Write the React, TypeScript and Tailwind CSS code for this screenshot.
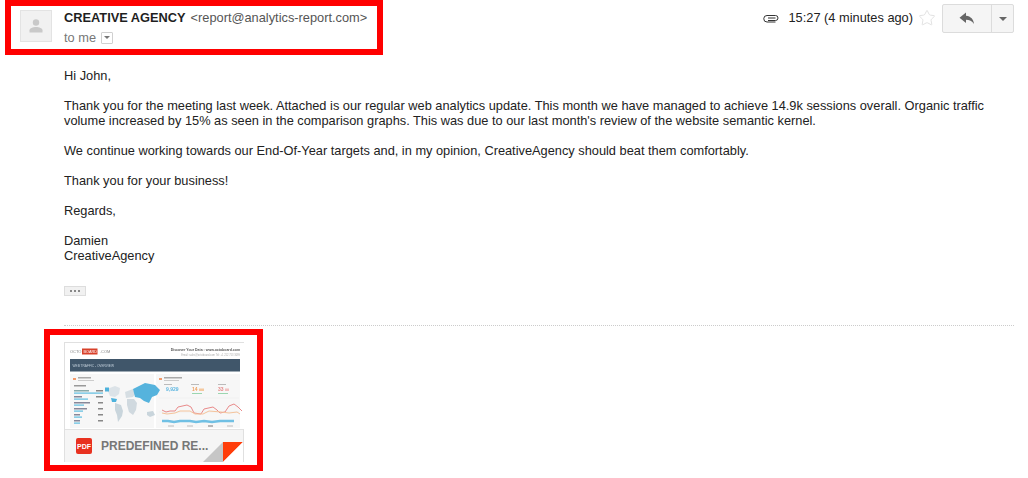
import { Star } from 'lucide-react';

const Avatar = () => (
    <div className="w-8 h-8 shrink-0 flex items-center justify-center bg-[#f1f1f1] border border-[#e3e3e3]">
        <svg width="16" height="16" viewBox="0 0 16 16">
            <circle cx="8" cy="4.5" r="3.2" fill="#c9c9c9" />
            <path d="M1.5 14.5v-2.2c0-2 3.4-3.3 6.5-3.3s6.5 1.300 6.500 3.300v2.200z" fill="#c9c9c9" />
        </svg>
    </div>
);

const ClipIcon = () => (
    <svg width="16" height="10" viewBox="0 0 16 10" fill="none" stroke="#333" strokeWidth="1">
        <path d="M5 7.500h7.500a2.300 2.300 0 0 0 0-5H4a3 3 0 0 0 0 6.500h8.500" />
        <path d="M12.500 5H5" />
    </svg>
);

const ReplyIcon = () => (
    <svg width="16" height="13" viewBox="0 0 16 13">
        <path d="M7 0.500L0.500 5.800L7 11V7.800c3.500 0 6 1 8 4.200c-.5-4.500-3-7.700-8-8.200z" fill="#666" />
    </svg>
);

const Thumbnail = () => (
    <svg width="180" height="86" viewBox="0 0 180 86" className="block">
        <defs>
            <filter id="soft" x="-5%" y="-5%" width="110%" height="110%">
                <feGaussianBlur stdDeviation="0.35" />
            </filter>
        </defs>
        <rect width="180" height="86" fill="#ffffff" />
        <g filter="url(#soft)">
            <text x="5" y="10" fontSize="4" fill="#888" fontFamily="Liberation Sans, sans-serif">OCTO</text>
            <rect x="17" y="5.500" width="15.500" height="6" fill="#d8402c" />
            <text x="18.500" y="10" fontSize="3.800" fill="#fff" fontFamily="Liberation Sans, sans-serif">BOARD</text>
            <text x="35" y="10" fontSize="4" fill="#888" fontFamily="Liberation Sans, sans-serif">.COM</text>
            <text x="175" y="8" fontSize="3.500" fill="#555" textAnchor="end" fontWeight="bold" fontFamily="Liberation Sans, sans-serif">Discover Your Data : www.octoboard.com</text>
            <text x="175" y="13" fontSize="2.600" fill="#aaa" textAnchor="end" fontFamily="Liberation Sans, sans-serif">Email: sales@octoboard.com Tel: +1 212 713 3099</text>

            <rect x="5" y="16" width="170" height="12.500" fill="#3f566b" />
            <text x="7.500" y="24" fontSize="3.200" fill="#c5d0da" fontFamily="Liberation Sans, sans-serif">WEB TRAFFIC - OVERVIEW</text>

            <rect x="5" y="31" width="84" height="54" fill="#f7f7f7" />
            <rect x="91" y="31" width="84" height="54" fill="#f7f7f7" />

            <rect x="8" y="35" width="3" height="2" fill="#f39a6b" />
            <rect x="13" y="34" width="13" height="1.500" fill="#aaa" />
            <rect x="13" y="37" width="16" height="1" fill="#ccc" />
            <rect x="9" y="42" width="12" height="1.500" fill="#999" />

            <rect x="9" y="47" width="15" height="1.500" fill="#8aa" />
            <rect x="31" y="47" width="7" height="1.500" fill="#888" />
            <rect x="9" y="49.500" width="29" height="1.200" fill="#5dbde0" />
            <rect x="9" y="53" width="8" height="1.500" fill="#889" />
            <rect x="31" y="53" width="7" height="1.500" fill="#888" />
            <rect x="9" y="55.500" width="14" height="1.200" fill="#5dbde0" />
            <rect x="9" y="59" width="16" height="1.500" fill="#889" />
            <rect x="33" y="59" width="5" height="1.500" fill="#888" />
            <rect x="9" y="61.500" width="10" height="1.200" fill="#5dbde0" />
            <rect x="9" y="65" width="13" height="1.500" fill="#889" />
            <rect x="33" y="65" width="5" height="1.500" fill="#888" />
            <rect x="9" y="67.500" width="9" height="1.200" fill="#5dbde0" />
            <rect x="9" y="71" width="6" height="1.500" fill="#889" />
            <rect x="33" y="71" width="5" height="1.500" fill="#888" />
            <rect x="9" y="73.500" width="8" height="1.200" fill="#5dbde0" />
            <rect x="9" y="77" width="6" height="1.500" fill="#889" />
            <rect x="33" y="77" width="5" height="1.500" fill="#888" />
            <rect x="9" y="79.500" width="6" height="1.200" fill="#5dbde0" />

            <path d="M42 46l8-3 5 2-1 6-4 3-5-1z" fill="#dce3e8" />
            <path d="M46 55l6 1-1 3-4 0z" fill="#4db2dc" />
            <path d="M50 60l6 2 2 6-1 5-4 6-1-7-2-5z" fill="#c9d5dc" />
            <path d="M60 49l8-3 2 5-2 3-7 1z" fill="#d6dee3" />
            <path d="M62 56l7 0 3 4-1 7-3 5-4-3-2-7z" fill="#d0d9df" />
            <path d="M68 46l12-6 10 2 5 5-3 5-5 2-3 6-5-2-4-3-5-1z" fill="#55b3dd" />
            <path d="M82 69l6-1 2 4-5 2-3-2z" fill="#c9d5dc" />
            <rect x="40" y="44.500" width="4" height="4" fill="#4db2dc" />

            <rect x="94" y="35" width="3" height="2" fill="#f39a6b" />
            <rect x="99" y="34" width="18" height="1.500" fill="#aaa" />
            <rect x="99" y="37" width="15" height="1" fill="#ccc" />
            <rect x="99" y="41" width="8" height="1" fill="#bbb" />
            <rect x="126" y="41" width="8" height="1" fill="#bbb" />
            <rect x="153" y="41" width="8" height="1" fill="#bbb" />
            <text x="101" y="48" fontSize="5" fill="#5db6e0" fontWeight="bold" fontFamily="Liberation Sans, sans-serif">9,929</text>
            <text x="127" y="48" fontSize="5" fill="#f0a060" fontWeight="bold" fontFamily="Liberation Sans, sans-serif">14</text>
            <rect x="134" y="45.500" width="5" height="2.500" fill="#f5c9a0" />
            <text x="153" y="48" fontSize="5" fill="#e58a8a" fontWeight="bold" fontFamily="Liberation Sans, sans-serif">33</text>
            <rect x="160" y="45.500" width="4" height="2.500" fill="#f1c0c0" />
            <rect x="127" y="50" width="10" height="1" fill="#9cd6b0" />
            <rect x="153" y="50" width="10" height="1" fill="#9cd6b0" />

            <line x1="94" y1="55" x2="174" y2="55" stroke="#e8e8e8" strokeWidth="0.500" />
            <line x1="94" y1="69" x2="174" y2="69" stroke="#e8e8e8" strokeWidth="0.500" />
            <path d="M97 67l4 2 4-1 5 0 3-4 9-2 4 2 3 6 7 1 3-5 9-2 4 3 3 3 5-1 4-6 5-2 4 3 4 4" fill="none" stroke="#e98a8a" strokeWidth="1" />
            <path d="M97 70l5 1 8-1 5-2 10 0 5 3 8 0 6-3 12 1 8 1 8-1 3 2" fill="none" stroke="#f5c49c" strokeWidth="1" />
            <path d="M97 78l6 0 6 1 6-1 10 0 6 1 8-1 8 1 8-1 14 0" fill="none" stroke="#70c0e4" strokeWidth="2.500" />
            <rect x="103" y="82.500" width="6" height="1" fill="#bbb" />
            <rect x="122" y="82.500" width="6" height="1" fill="#bbb" />
            <rect x="143" y="82.500" width="5" height="1" fill="#777" />
            <rect x="162" y="82.500" width="6" height="1" fill="#bbb" />
        </g>
    </svg>
);

const AttachmentFooter = () => (
    <div className="relative h-[33px] flex items-center bg-[#f5f5f5] border-t border-[#e2e2e2]">
        <div className="ml-[11px] w-4 h-4 rounded-[2px] bg-[#e8311f] flex items-center justify-center text-[7px] font-bold leading-none text-white">
            PDF
        </div>
        <span className="ml-[9px] text-[12px] font-bold text-[#777777] whitespace-nowrap">PREDEFINED RE...</span>
        <svg width="40" height="20" viewBox="0 0 40 20" className="absolute right-0 bottom-0">
            <polygon points="0,20 20,0 20,20" fill="#c6c6c6" />
            <polygon points="20,0 40,0 20,20" fill="#ff3d0a" />
            <polygon points="40,0 40,20 20,20" fill="#ffffff" />
        </svg>
    </div>
);

export default function App() {
    return (
        <div className="w-[1028px] h-[478px] overflow-hidden bg-white text-[12.8px] leading-[15px] text-[#222222] font-['Liberation_Sans',Arial,sans-serif]">
            <header className="flex justify-between pl-5 pr-[14px] pt-1 h-[68px]">
                <div className="relative flex gap-3 pt-1.5 h-fit">
                    <div className="absolute -left-[15px] -top-1 w-[378px] h-[55px] border-[6px] border-[#ff0000]" />
                    <Avatar />
                    <div className="flex flex-col">
                        <div className="flex items-baseline gap-[5px] whitespace-nowrap">
                            <span className="font-bold text-[#1f1f1f]">CREATIVE AGENCY</span>
                            <span className="text-[#555555]">&lt;report@analytics-report.com&gt;</span>
                        </div>
                        <div className="flex items-center gap-[5px] mt-[5px] text-[#777777]">
                            to me
                            <span className="w-3 h-3 flex items-center justify-center border border-[#d0d0d0] rounded-[1px]">
                                <span className="border-x-[3px] border-t-[3px] border-x-transparent border-t-[#777777]" />
                            </span>
                        </div>
                    </div>
                </div>

                <div className="flex items-start">
                    <div className="flex items-center h-[29px] pb-[2px]">
                        <ClipIcon />
                        <span className="ml-2.5 whitespace-nowrap">15:27 (4 minutes ago)</span>
                        <Star size={18} strokeWidth={1} color="#d8d8d8" className="ml-[5px]" />
                    </div>
                    <div className="ml-1.5 flex h-[29px] bg-[#f5f5f5] border border-[#dcdcdc] rounded-[2px]">
                        <div className="w-[49px] flex items-center justify-center border-r border-[#dcdcdc]">
                            <ReplyIcon />
                        </div>
                        <div className="w-[21px] flex items-center justify-center">
                            <span className="border-x-[4px] border-t-[4px] border-x-transparent border-t-[#666666]" />
                        </div>
                    </div>
                </div>
            </header>

            <main className="pl-16 pr-[40px]">
                <p>Hi John,</p>
                <p className="mt-[15px]">
                    Thank you for the meeting last week. Attached is our regular web analytics update. This month we have managed to achieve 14.9k sessions overall. Organic traffic volume increased by 15% as seen in the comparison graphs. This was due to our last month's review of the website semantic kernel.
                </p>
                <p className="mt-[15px]">We continue working towards our End-Of-Year targets and, in my opinion, CreativeAgency should beat them comfortably.</p>
                <p className="mt-[15px]">Thank you for your business!</p>
                <p className="mt-[15px]">Regards,</p>
                <p className="mt-[15px]">Damien<br />CreativeAgency</p>

                <div className="mt-[23px] w-[22px] h-[10px] flex items-center justify-center gap-[2px] bg-[#f1f1f1] border border-[#dddddd]">
                    <span className="w-[2px] h-[2px] bg-[#888888]" />
                    <span className="w-[2px] h-[2px] bg-[#888888]" />
                    <span className="w-[2px] h-[2px] bg-[#888888]" />
                </div>
            </main>

            <div className="ml-16 mr-[14px] mt-[29px] border-t border-dotted border-[#cccccc]" />

            <div className="relative mt-4 ml-16 w-[180px] h-[120px] border border-[#e0e0e0]">
                <div className="absolute -left-[21px] -top-[14px] w-[219px] h-[142px] border-[6px] border-[#ff0000]" />
                <Thumbnail />
                <AttachmentFooter />
            </div>
        </div>
    );
}
